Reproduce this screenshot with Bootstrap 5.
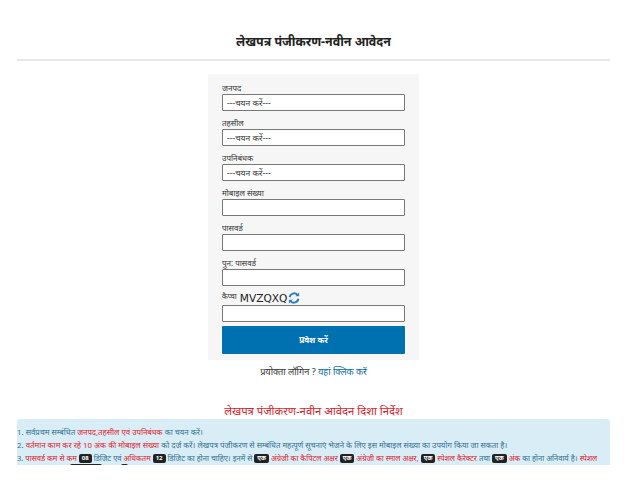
<!DOCTYPE html>
<html lang="hi">
<head>
<meta charset="utf-8">
<title>लेखपत्र पंजीकरण</title>
<link href="https://cdn.jsdelivr.net/npm/bootstrap@5.3.0/dist/css/bootstrap.min.css" rel="stylesheet">
<style>
html,body{height:490px;overflow:hidden;background:#fff}
body{font-family:"Noto Sans","Liberation Sans",sans-serif;font-size:8px;color:#333;padding:0 18px 0 17px}
.page-title{font-size:12.4px;font-weight:700;color:#222;text-align:center;margin:0;padding-top:32px;height:59px;line-height:20px}
.title-rule{margin:0;border:0;border-top:2px solid #e8e8e8;opacity:1}
.reg-panel{width:211px;height:286px;margin:13px auto 0;background:#f6f6f6;padding:7px 14px 0}
.reg-label{display:block;font-size:8px;line-height:13px;height:13px;margin:0;color:#333}
.reg-input{display:block;width:100%;height:17px;min-height:17px;padding:0 4px;font-size:8px;line-height:14px;color:#333;background:#fff;border:1px solid #777;border-radius:1px;margin-bottom:5px;font-family:inherit}
select.reg-input{appearance:none;-webkit-appearance:none;font-size:8.5px}
.captcha-row{display:flex;align-items:center;height:14px;gap:1px;margin-bottom:0}
.captcha-row .reg-label{height:auto;margin-top:-4px;font-size:7.5px;margin-right:2px}
.captcha-code{font-family:"DejaVu Sans",sans-serif;font-size:10.6px;color:#222;line-height:14px}
.reg-submit{display:block;width:100%;height:28px;padding:0;border:0;border-radius:1px;background:#0071b0;color:#fff;font-size:8.2px;font-weight:700;margin-top:-1px}
.login-line{text-align:center;font-size:9.2px;line-height:12px;margin:6px 0 0;color:#333}
.login-line a{color:#0b6aa5;text-decoration:none}
.guide-title{font-size:11.3px;font-weight:400;color:#d8232a;text-align:center;margin:25px 0 0;line-height:16px}
.guide-box{height:46px;overflow:hidden;background:#d9edf7;color:#31708f;border:0;border-radius:3px 3px 0 0;padding:7px 0 0 0;font-size:7.85px;margin:0;white-space:nowrap}
.guide-box p{margin:0;height:13px;line-height:13px}
.guide-box p.dense-line{font-size:7.6px;height:12px}
.hot{color:#e0202a}
.chip{display:inline-block;background:#222;color:#fff;font-size:6px;font-weight:700;padding:0 3px;border-radius:2px;line-height:9px;vertical-align:middle}
.cut-line{display:flex;gap:19px;height:6px;padding-left:53px}
.cut-wide{width:32px;background:#222;border-radius:2px}
.cut-small{width:7px;background:#222;border-radius:2px}
</style>
</head>
<body>
<h1 class="page-title">लेखपत्र पंजीकरण-नवीन आवेदन</h1>
<hr class="title-rule">
<form class="reg-panel">
  <label class="reg-label">जनपद</label>
  <select class="reg-input"><option>---चयन करें---</option></select>
  <label class="reg-label">तहसील</label>
  <select class="reg-input"><option>---चयन करें---</option></select>
  <label class="reg-label">उपनिबंधक</label>
  <select class="reg-input"><option>---चयन करें---</option></select>
  <label class="reg-label">मोबाइल संख्या</label>
  <input class="reg-input" type="text">
  <label class="reg-label">पासवर्ड</label>
  <input class="reg-input" type="password">
  <label class="reg-label">पुन: पासवर्ड</label>
  <input class="reg-input" type="password">
  <div class="captcha-row mt-1">
    <label class="reg-label">कैप्चा</label>
    <span class="captcha-code">MVZQXQ</span>
    <svg width="12" height="12" viewBox="0 0 16 16" fill="none" stroke="#2a7fc1" stroke-width="2.6" aria-hidden="true"><path d="M2.2 7A6 6 0 0 1 12.6 3.8"/><path d="M13.8 9A6 6 0 0 1 3.4 12.2"/><path d="M14.8 0.6v5H9.8z" fill="#2a7fc1" stroke="none"/><path d="M1.2 15.4v-5h5z" fill="#2a7fc1" stroke="none"/></svg>
  </div>
  <input class="reg-input" type="text">
  <button type="button" class="reg-submit">प्रवेश करें</button>
</form>
<p class="login-line">प्रयोक्ता लॉगिन ? <a href="#">यहां क्लिक करें</a></p>
<h2 class="guide-title">लेखपत्र पंजीकरण-नवीन आवेदन दिशा निर्देश</h2>
<div class="guide-box">
  <p>1. सर्वप्रथम सम्बंधित <span class="hot">जनपद,तहसील एवं उपनिबंधक</span> का चयन करें।</p>
  <p>2. <span class="hot">वर्तमान काम कर रहे 10 अंक की मोबाइल संख्या</span> को दर्ज करें। लेखपत्र पंजीकरण से सम्बंधित महत्पूर्ण सूचनाएं भेजने के लिए इस मोबाइल संख्या का उपयोग किया जा सकता है।</p>
  <p class="dense-line">3. <span class="hot">पासवर्ड कम से कम</span> <span class="chip">08</span> डिजिट एवं <span class="hot">अधिकतम</span> <span class="chip">12</span> डिजिट का होना चाहिए। इनमें से <span class="chip">एक</span> <span class="hot">अंग्रेजी का कैपिटल अक्षर</span> <span class="chip">एक</span> <span class="hot">अंग्रेजी का स्माल अक्षर,</span> <span class="chip">एक</span> <span class="hot">स्पेशल कैरेक्टर</span> तथा <span class="chip">एक</span> <span class="hot">अंक</span> का होना अनिवार्य है। <span class="hot">स्पेशल</span></p>
  <div class="cut-line"><span class="cut-wide"></span><span class="cut-small"></span></div>
</div>
<script src="https://cdn.jsdelivr.net/npm/bootstrap@5.3.0/dist/js/bootstrap.bundle.min.js"></script>
</body>
</html>
